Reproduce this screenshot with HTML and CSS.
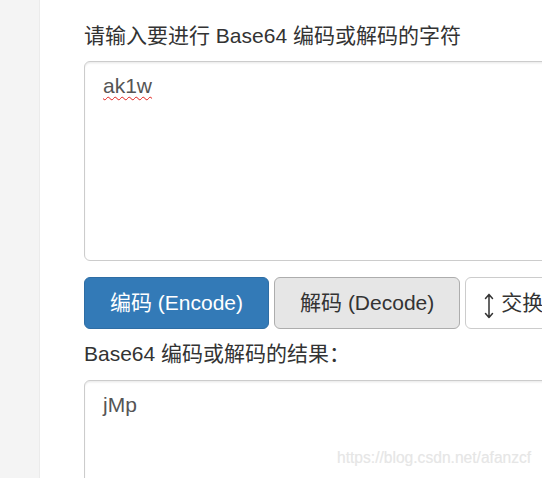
FILE: index.html
```
<!DOCTYPE html>
<html lang="zh-CN">
<head>
<meta charset="utf-8">
<title>Base64</title>
<link rel="stylesheet" href="styles.css">
</head>
<body>
<div class="page">
  <aside class="sidebar"></aside>
  <main class="main">
    <label class="label">请输入要进行 Base64 编码或解码的字符</label>
    <div class="textbox input-box"><span class="misspelled">ak1w</span></div>
    <div class="actions">
      <button class="btn btn-primary">编码 (Encode)</button>
      <button class="btn btn-active">解码 (Decode)</button>
      <button class="btn btn-default btn-swap"><svg class="swap-icon" viewBox="0 0 10 26" width="10" height="26" aria-hidden="true"><path d="M5 1.5V24.5M1.5 5.5L5 1.5L8.5 5.5M1.5 20.5L5 24.5L8.5 20.5" fill="none" stroke="#333" stroke-width="1.5" stroke-linecap="round" stroke-linejoin="round"/></svg>交换</button>
    </div>
    <label class="label label-result">Base64 编码或解码的结果：</label>
    <div class="textbox output-box">jMp</div>
  </main>
</div>
<div class="watermark">https://blog.csdn.net/afanzcf</div>
</body>
</html>
```
FILE: styles.css
```
html, body {
  margin: 0;
  padding: 0;
  height: 100%;
  overflow: hidden;
  background: #fff;
}
body {
  font-family: "Liberation Sans", "Noto Sans CJK SC", sans-serif;
  font-size: 21px;
  line-height: 30px;
  color: #333;
}
.page {
  display: flex;
  min-height: 100%;
  width: 760px;
}
.sidebar {
  width: 39px;
  flex: none;
  background: #f4f4f4;
  border-right: 1px solid #ebebeb;
}
.main {
  flex: 1;
  padding: 21px 0 0 44px;
}
.label {
  display: block;
  margin: 0 0 10px;
  font-weight: normal;
}
.label-result {
  margin-bottom: 11px;
}
.textbox {
  box-sizing: border-box;
  width: 640px;
  border: 1px solid #ccc;
  border-radius: 6px;
  padding: 9px 18px;
  color: #555;
  background: #fff;
  box-shadow: inset 0 1.5px 1.5px rgba(0,0,0,.075);
}
.input-box {
  height: 200px;
}
.misspelled {
  text-decoration: underline wavy #e0201c;
  text-decoration-thickness: 1px;
  text-underline-offset: 3px;
}
.actions {
  display: flex;
  gap: 5px;
  margin: 16px 0 10px;
}
.btn {
  font: inherit;
  line-height: 30px;
  margin: 0;
  padding: 9.5px 25px;
  border: 1px solid #ccc;
  border-radius: 6px;
  color: #333;
  background: #fff;
  display: inline-flex;
  align-items: center;
  white-space: nowrap;
}
.btn-primary {
  background: #337ab7;
  border-color: #2e6da4;
  color: #fff;
}
.btn-active {
  background: #e6e6e6;
  border-color: #adadad;
}
.btn-swap {
  padding-left: 18px;
  padding-right: 18px;
}
.swap-icon {
  margin-right: 7px;
  margin-top: 5px;
}
.output-box {
  height: 200px;
}
.watermark {
  position: absolute;
  left: 337px;
  top: 446px;
  font-family: "Liberation Sans", sans-serif;
  font-size: 15.6px;
  line-height: 24px;
  color: #e6e6e6;
  text-shadow: 0 0 1px #f4f4f4;
}
```
